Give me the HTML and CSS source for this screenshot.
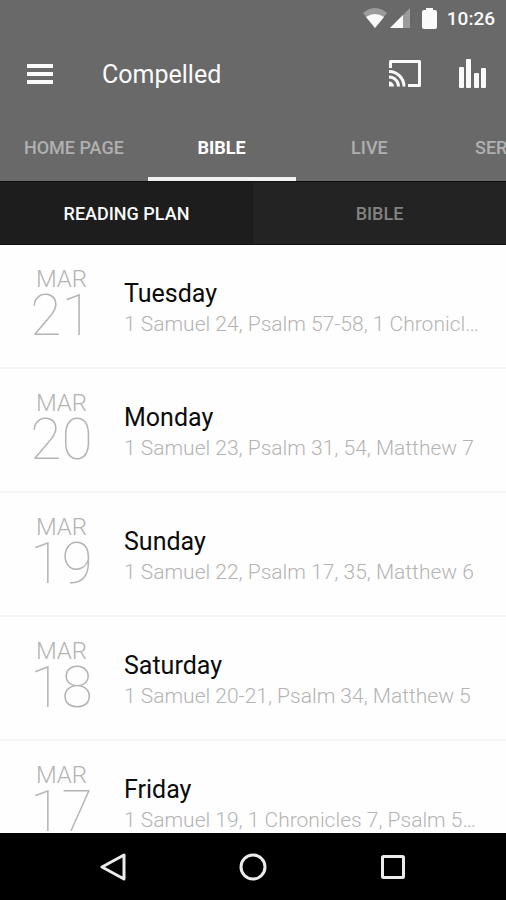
FILE: index.html
```html
<!DOCTYPE html>
<html lang="en">
<head>
<meta charset="utf-8">
<meta name="viewport" content="width=device-width, initial-scale=1">
<title>Compelled</title>
<link rel="stylesheet" href="styles.css">
</head>
<body>
<header class="top">
  <div class="status">
    <svg class="wifi" width="24" height="20" viewBox="0 0 24 20" aria-hidden="true"><path class="dim" d="M0 5Q12-5 24 5L12 20Z"/><path d="M3 9Q12 3 21 9L12 20Z"/></svg>
    <svg class="signal" width="20" height="20" viewBox="0 0 20 20" aria-hidden="true"><path class="dim" d="M20 0V20H0Z"/><path d="M13 7V20H0Z"/></svg>
    <svg class="battery" width="15" height="21" viewBox="0 0 15 21" aria-hidden="true"><path d="M4 0H11V2H13Q15 2 15 4V19Q15 21 13 21H2Q0 21 0 19V4Q0 2 2 2H4Z"/></svg>
    <span class="clock">10:26</span>
  </div>
  <div class="appbar">
    <button class="icon-btn" aria-label="Menu"><svg width="26" height="20" viewBox="0 0 26 20"><path d="M0 0H26V4H0ZM0 8H26V12H0ZM0 16H26V20H0Z"/></svg></button>
    <h1 class="title">Compelled</h1>
    <button class="icon-btn" aria-label="Cast"><svg width="32" height="27" viewBox="0 0 32 27"><path class="line" d="M1.5 8V1.5H30.5V25.5H19M0 11.5A15 15 0 0 1 15 26.5M0 17A9.500 9.500 0 0 1 9.500 26.500"/><path d="M0 21.500A5 5 0 0 1 5 26.500H0Z"/></svg></button>
    <button class="icon-btn" aria-label="Now playing"><svg width="27" height="29" viewBox="0 0 27 29"><rect y="8" width="5" height="21" rx="1"/><rect x="7" width="5" height="29" rx="1"/><rect x="15" y="14" width="5" height="15" rx="1"/><rect x="22" y="9" width="5" height="20" rx="1"/></svg></button>
  </div>
  <nav class="tabs" aria-label="Sections">
    <a class="tab" href="#home">HOME PAGE</a>
    <a class="tab active" href="#bible">BIBLE</a>
    <a class="tab" href="#live">LIVE</a>
    <a class="tab" href="#sermons">SERMONS</a>
  </nav>
</header>
<nav class="subtabs" aria-label="Bible">
  <a class="subtab current" href="#plan">READING PLAN</a>
  <a class="subtab" href="#text">BIBLE</a>
</nav>
<main class="list">
  <article class="row"><time class="date"><span class="month">MAR</span><span class="day">21</span></time><div class="info"><h2 class="weekday">Tuesday</h2><p class="passage">1 Samuel 24, Psalm 57-58, 1 Chronicles 6</p></div></article>
  <article class="row"><time class="date"><span class="month">MAR</span><span class="day">20</span></time><div class="info"><h2 class="weekday">Monday</h2><p class="passage">1 Samuel 23, Psalm 31, 54, Matthew 7</p></div></article>
  <article class="row"><time class="date"><span class="month">MAR</span><span class="day">19</span></time><div class="info"><h2 class="weekday">Sunday</h2><p class="passage">1 Samuel 22, Psalm 17, 35, Matthew 6</p></div></article>
  <article class="row"><time class="date"><span class="month">MAR</span><span class="day">18</span></time><div class="info"><h2 class="weekday">Saturday</h2><p class="passage">1 Samuel 20-21, Psalm 34, Matthew 5</p></div></article>
  <article class="row"><time class="date"><span class="month">MAR</span><span class="day">17</span></time><div class="info"><h2 class="weekday">Friday</h2><p class="passage">1 Samuel 19, 1 Chronicles 7, Psalm 59, 60</p></div></article>
</main>
<footer class="system">
  <button class="sys-btn" aria-label="Back"><svg width="28" height="28" viewBox="0 0 28 28"><path class="line" d="M25 2V26L3 14Z"/></svg></button>
  <button class="sys-btn" aria-label="Home"><svg width="28" height="28" viewBox="0 0 28 28"><circle class="line" cx="14" cy="14" r="12"/></svg></button>
  <button class="sys-btn" aria-label="Recent apps"><svg width="28" height="28" viewBox="0 0 28 28"><rect class="line" x="3.500" y="3.500" width="21" height="21" rx="1"/></svg></button>
</footer>
</body>
</html>
```
FILE: styles.css
```css
* { box-sizing: border-box; margin: 0; padding: 0; }
body {
  display: flex;
  flex-direction: column;
  height: 100vh;
  overflow: hidden;
  background: #fefefe;
  font-family: Roboto, "Liberation Sans", sans-serif;
}
a { color: inherit; text-decoration: none; }
button { border: 0; background: none; color: inherit; }
svg { display: block; fill: currentColor; }
.line { fill: none; stroke: currentColor; stroke-width: 3; stroke-linejoin: round; }
.dim { opacity: 0.35; }
.top { flex: none; background: #696969; color: #fafafa; }
.status {
  display: flex;
  align-items: center;
  justify-content: flex-end;
  height: 36px;
  padding-right: 11px;
}
.signal { margin: 0 12px 0 3px; }
.clock { margin-left: 10px; font-size: 19px; font-weight: 500; }
.appbar {
  display: flex;
  align-items: center;
  gap: 38px;
  height: 75px;
  padding: 0 20px 0 27px;
}
.title { flex: 1; padding: 2px 0 0 11px; font-size: 25px; font-weight: 400; }
.tabs {
  display: grid;
  grid-auto-flow: column;
  grid-auto-columns: 29.2%;
  height: 70px;
  overflow: hidden;
  font-size: 18px;
  font-weight: 500;
}
.tab {
  display: flex;
  align-items: center;
  justify-content: center;
  border-bottom: 4px solid transparent;
  padding-top: 6px;
  color: #b0b0b0;
}
.active { border-color: #f2f2f2; color: #fff; font-weight: 700; }
.subtabs {
  display: grid;
  flex: none;
  grid-template-columns: 1fr 1fr;
  height: 64px;
  border: solid #101010;
  border-width: 1px 0;
  background: #232323;
  color: #828282;
  font-size: 18px;
  font-weight: 500;
}
.subtab { display: flex; align-items: center; justify-content: center; }
.current { background: #1d1d1d; color: #fafafa; }
.list { flex: 1; min-height: 0; overflow: hidden; }
.row {
  display: flex;
  height: 124px;
  padding: 20px 24px 0 0;
  border-bottom: 2px solid #f6f6f6;
}
.date { flex: none; width: 124px; padding-right: 1px; color: #b4b4b4; text-align: center; }
.month { display: block; font-size: 24px; font-weight: 300; line-height: 28px; }
.day { display: block; font-size: 57px; font-weight: 100; line-height: 46px; }
.info { flex: 1; min-width: 0; padding-top: 13px; }
.weekday { color: #0c0c0c; font-size: 25px; font-weight: 400; line-height: 32px; }
.passage {
  overflow: hidden;
  color: #b4b4b4;
  font-size: 21px;
  font-weight: 300;
  line-height: 28px;
  text-overflow: ellipsis;
  white-space: nowrap;
}
.system {
  display: flex;
  flex: none;
  align-items: center;
  justify-content: center;
  gap: 112px;
  height: 67px;
  background: #000;
  color: #ececec;
}
```
